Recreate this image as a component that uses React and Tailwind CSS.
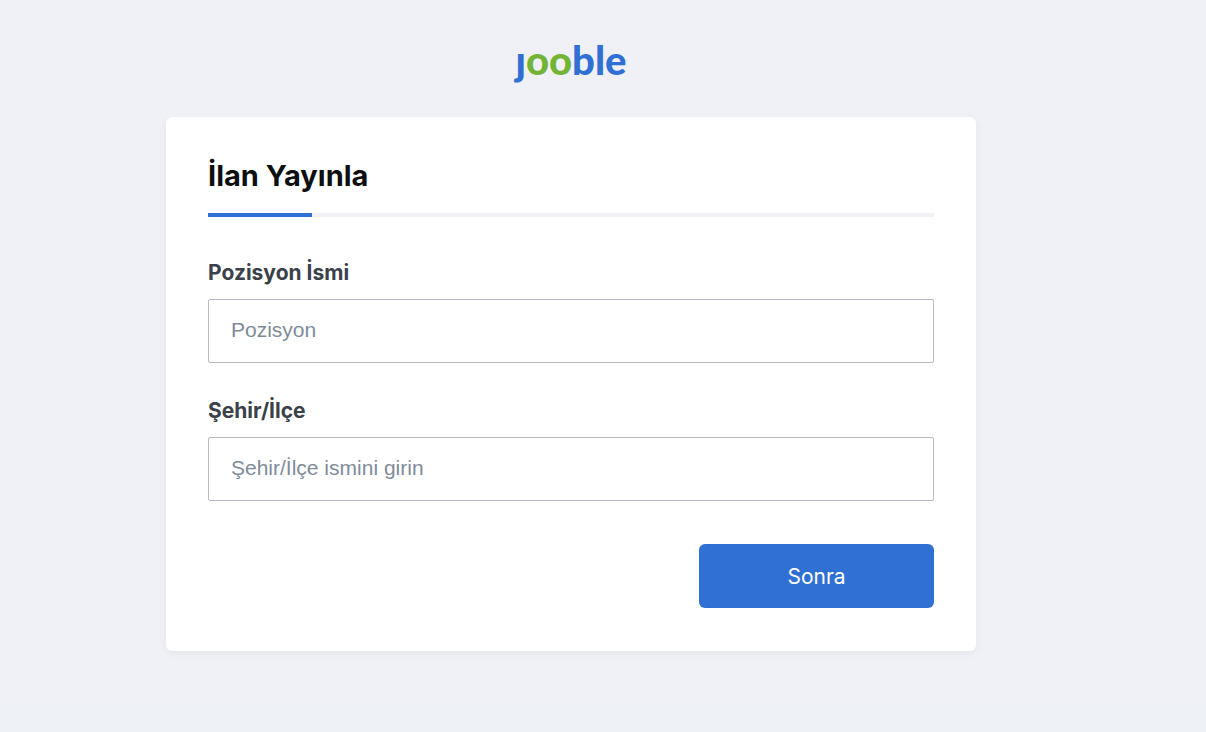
import { useState } from "react";

const FIELDS = [
	{ id: "position", label: "Pozisyon İsmi", placeholder: "Pozisyon" },
	{ id: "region", label: "Şehir/İlçe", placeholder: "Şehir/İlçe ismini girin" },
];

const Logo = () => (
	<a
		href="#"
		aria-label="jooble"
		className="block font-['Lato',sans-serif] text-[40px] leading-12 font-black text-[#306fd3]"
	>
		ȷ<span className="text-[#73b437]">oo</span>ble
	</a>
);

const StepProgress = ({ step, total }) => (
	<div className="h-1 bg-[#f1f2f5]">
		<div
			className="h-full bg-[#306fd3]"
			style={{ width: `${(step / total) * 100}%` }}
		/>
	</div>
);

const TextField = ({ id, label, placeholder, value, onChange }) => (
	<div>
		<label
			htmlFor={id}
			className="block mb-3 text-[21px] leading-7 font-bold text-[#3a4149]"
		>
			{label}
		</label>
		<input
			id={id}
			name={id}
			type="text"
			value={value}
			onChange={onChange}
			placeholder={placeholder}
			className="block w-full h-16 px-[22px] pb-0.5 rounded-xs border border-[#b6bbc4] bg-white font-['Liberation_Sans',Arial,sans-serif] text-[21px] text-[#3a4149] placeholder:text-[#808b99] outline-none focus:border-[#306fd3]"
		/>
	</div>
);

function App() {
	const [values, setValues] = useState({ position: "", region: "" });

	const handleChange = (e) => {
		setValues({ ...values, [e.target.name]: e.target.value });
	};

	return (
		<div className="min-h-screen flex flex-col bg-[#f0f1f6] font-['Inter',sans-serif]">
			<main className="grow flex flex-col items-center pl-4 pr-20 pt-9 pb-13">
				<Logo />

				<form
					onSubmit={(e) => e.preventDefault()}
					className="w-full max-w-[810px] mt-[33px] px-[42px] pt-[39px] pb-[43px] rounded-md bg-white shadow-[0_2px_10px_rgba(0,0,0,0.05)]"
				>
					<h1 className="mb-[17px] text-[29px] leading-10 font-bold text-[#0d0f11]">
						İlan Yayınla
					</h1>
					<StepProgress step={1} total={7} />

					<div className="mt-[42px] flex flex-col gap-[34px]">
						{FIELDS.map((field) => (
							<TextField
								key={field.id}
								{...field}
								value={values[field.id]}
								onChange={handleChange}
							/>
						))}
					</div>

					<div className="mt-[43px] flex justify-end">
						<button
							type="submit"
							className="w-[235px] h-16 pt-0.5 rounded-md bg-[#306fd3] text-[21px] text-white cursor-pointer"
						>
							Sonra
						</button>
					</div>
				</form>
			</main>
			<footer className="h-7 bg-[#eef2f7]" />
		</div>
	);
}

export default App;
